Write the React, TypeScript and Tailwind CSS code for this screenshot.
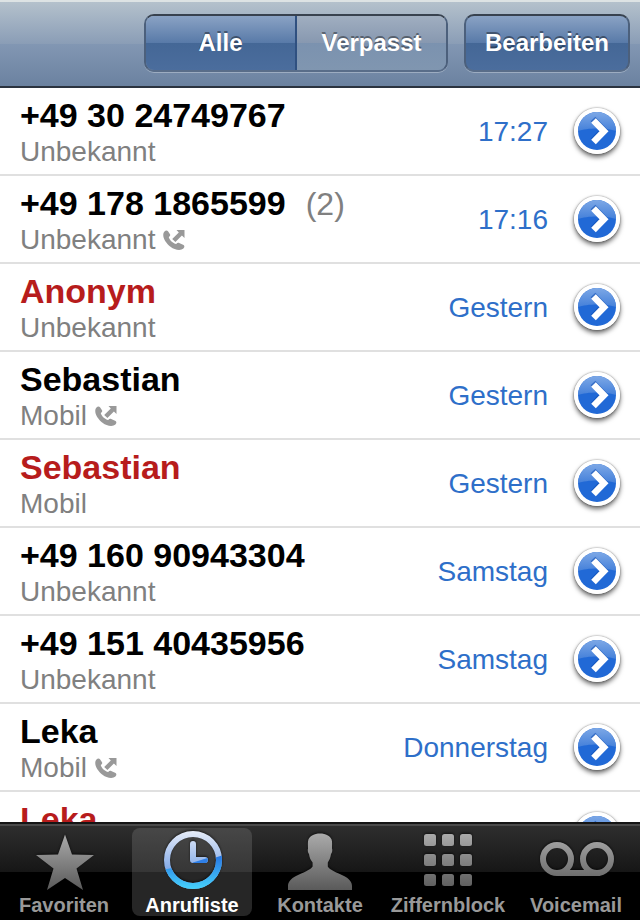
import React, { useState } from "react";

interface Call {
  name: string;
  label?: string;
  time?: string;
  count?: number;
  missed?: boolean;
  outgoing?: boolean;
}

const calls: Call[] = [
  { name: "+49 30 24749767", label: "Unbekannt", time: "17:27" },
  { name: "+49 178 1865599", label: "Unbekannt", time: "17:16", count: 2, outgoing: true },
  { name: "Anonym", label: "Unbekannt", time: "Gestern", missed: true },
  { name: "Sebastian", label: "Mobil", time: "Gestern", outgoing: true },
  { name: "Sebastian", label: "Mobil", time: "Gestern", missed: true },
  { name: "+49 160 90943304", label: "Unbekannt", time: "Samstag" },
  { name: "+49 151 40435956", label: "Unbekannt", time: "Samstag" },
  { name: "Leka", label: "Mobil", time: "Donnerstag", outgoing: true },
  { name: "Leka", missed: true },
];

const OutgoingIcon = () => (
  <svg viewBox="0 0 22 20" className="w-[22px] h-5 fill-[#999999]" aria-hidden="true">
    <path d="M1.5 1.5 C2.500 .4 4.200 .3 5 1.300 L7 4.200 C7.600 5.400 7 6.200 5.800 7.200 C6.400 9.800 10 13.400 13.200 14 C14.200 12.900 15 12.500 16.200 13 L20.600 15 C21.800 15.800 21.500 17.600 20.400 18.600 C18.600 20.200 15 20.400 11.600 19 C6.400 16.800 2 12 .6 7.400 C-.1 4.800 .3 2.700 1.500 1.500 Z" />
    <path d="M13.500 0 H21.500 V8 L18.900 5.600 L12.400 12 L9.200 8.900 L15.800 2.500 Z" />
  </svg>
);

// Round blue button at the end of each row
const DetailIcon = () => (
  <svg viewBox="0 0 46 46" className="w-[46px] h-[46px]" aria-hidden="true">
    <defs>
      <linearGradient id="detail-gloss" x1="0" y1="0" x2="0" y2="1">
        <stop offset="0" stopColor="#7da8e6" />
        <stop offset="1" stopColor="#4480da" />
      </linearGradient>
    </defs>
    <circle cx="23" cy="23" r="23" fill="#fff" />
    <circle cx="23" cy="23" r="19" fill="#2169d6" />
    <path d="M4 23 A19 19 0 0 1 42 23 C33 19.500 13 19.500 4 23 Z" fill="url(#detail-gloss)" />
    <path d="M19 11 L29.500 22 L19 33" fill="none" stroke="#0f4fb4" strokeWidth="6.500" opacity=".6" />
    <path d="M19.500 12.500 L30 23.300 L19.500 34" fill="none" stroke="#fff" strokeWidth="6.500" />
  </svg>
);

const CallRow = ({ call }: { call: Call }) => (
  <li className="h-[88px] flex items-center px-5 bg-white border-b-2 border-[#e0e0e0]">
    <div className="flex-1 min-w-0">
      <div className="flex items-baseline gap-5 whitespace-nowrap">
        <span className={`text-[34px] leading-10 font-bold ${call.missed ? "text-[#b71c1c]" : "text-black"}`}>{call.name}</span>
        {call.count && <span className="text-[32px] leading-10 text-[#808080]">({call.count})</span>}
      </div>
      <div className="h-8 pt-px flex items-center gap-2 text-[28px] leading-8 text-[#808080]">
        <span>{call.label}</span>
        {call.outgoing && <OutgoingIcon />}
      </div>
    </div>
    <span className="pt-0.5 text-[28px] leading-8 text-[#2e6fc9]">{call.time}</span>
    <button aria-label="Details" className="ml-[26px] rounded-full shadow-[0_3px_5px_rgba(0,0,0,0.6),0_0_2px_rgba(0,0,0,0.5)]">
      <DetailIcon />
    </button>
  </li>
);

const StarIcon = () => (
  <path fill="url(#tab-gray)" d="M41 4.500 L48 24.500 L70 25 L52.500 38.600 L59 60 L41 48 L23 60 L29.500 38.600 L12 25 L34 24.500 Z" />
);

const ClockIcon = () => (
  <g fill="none" strokeWidth="6" strokeLinecap="round" strokeLinejoin="round">
    <defs>
      <linearGradient id="clock-top" gradientUnits="userSpaceOnUse" x1="0" y1="1" x2="0" y2="38">
        <stop offset="0" stopColor="#e6ecf8" />
        <stop offset="1" stopColor="#86ace8" />
      </linearGradient>
      <linearGradient id="clock-bottom" gradientUnits="userSpaceOnUse" x1="0" y1="26" x2="0" y2="59">
        <stop offset="0" stopColor="#2777e4" />
        <stop offset="1" stopColor="#46d2fc" />
      </linearGradient>
      <clipPath id="clock-clip">
        <path d="M0 41 Q42 36 80 22 V60 H0 Z" />
      </clipPath>
    </defs>
    <circle cx="41" cy="30" r="26" stroke="url(#clock-top)" />
    <path d="M41 14 V30 H53" stroke="url(#clock-top)" />
    <g clipPath="url(#clock-clip)">
      <circle cx="41" cy="30" r="26" stroke="url(#clock-bottom)" />
    </g>
    <path d="M41 32.500 L55.500 28 C56.500 31 55 33 53 33 H41 Z" fill="#2f80e8" stroke="none" />
  </g>
);

const PersonIcon = () => (
  <path
    fill="url(#tab-gray)"
    d="M40 3.500 C46 3.500 50 6 51.600 9.500 C52.400 12 52 15 52 18.500 C52.800 20 52 23 51 24 C50.500 27.500 49.500 30 47.800 32.500 V36.500 C49.500 40 57 42.500 64 46 C69 48.500 72 52 72 56 V60 H8 V56 C8 52 11 48.500 16 46 C23 42.500 30.500 40 32.600 36.500 V32.500 C30.500 30 29.500 27.500 29 24 C28 23 27.400 20 28 18.500 C28 15 27.600 12 28.400 9.500 C30 6 34 3.500 40 3.500 Z"
  />
);

const KeypadIcon = () => (
  <g fill="url(#tab-gray)">
    {[4, 24, 44].map((y) => [16, 34, 52].map((x) => (
      <rect key={`${x}-${y}`} x={x} y={y} width="12" height="12" rx="2.500" />
    )))}
  </g>
);

const VoicemailIcon = () => (
  <g fill="none" stroke="url(#tab-gray)" strokeWidth="6">
    <circle cx="21" cy="29" r="14" />
    <circle cx="61" cy="29" r="14" />
    <path d="M21 43 H61 V42.900" />
  </g>
);

const tabs = [
  { name: "Favoriten", Icon: StarIcon },
  { name: "Anrufliste", Icon: ClockIcon },
  { name: "Kontakte", Icon: PersonIcon },
  { name: "Ziffernblock", Icon: KeypadIcon },
  { name: "Voicemail", Icon: VoicemailIcon },
];

const blueFill = "bg-[linear-gradient(#8aa2c4_0%,#587aa8_50%,#446796_50%,#4b6d9d_100%)]";
const grayFill = "bg-[linear-gradient(#a0aec0_0%,#8798b0_50%,#7b92af_50%,#8096b0_100%)]";
const buttonFrame = "h-[58px] rounded-[10px] border-2 border-t-[#38424f] border-x-[#4c607c] border-b-[#596d89] shadow-[0_1px_0_rgba(255,255,255,0.3)]";
const buttonText = "text-2xl leading-7 font-bold text-white [text-shadow:0_-2px_0_rgba(0,0,0,0.4)]";

const App = () => {
  const [filter, setFilter] = useState("Alle");
  const [activeTab, setActiveTab] = useState("Anrufliste");

  const visibleCalls = filter === "Alle" ? calls : calls.filter((c) => c.missed);

  return (
    <div className="h-screen flex flex-col bg-white font-['Liberation_Sans',Arial,sans-serif]">
      {/* Top bar */}
      <header className="h-[88px] shrink-0 flex items-start justify-end gap-4 pt-3 pr-[10px] border-t-2 border-t-[#dde3e4] border-b-2 border-b-[#2b333f] bg-[linear-gradient(#b4c1cc_0%,#8a9db6_50%,#8297b3_50%,#6b82a0_100%)]">
        <div className={`w-[304px] flex overflow-hidden ${buttonFrame}`}>
          {["Alle", "Verpasst"].map((option) => (
            <button
              key={option}
              onClick={() => setFilter(option)}
              aria-pressed={filter === option}
              className={`flex-1 border-r-2 border-[#2f5080] last:border-r-0 ${buttonText} ${filter === option ? blueFill : grayFill}`}
            >
              {option}
            </button>
          ))}
        </div>
        <button className={`w-[166px] ${buttonFrame} ${buttonText} ${blueFill}`}>Bearbeiten</button>
      </header>

      {/* Call list */}
      <ul className="flex-1 min-h-0 overflow-y-auto [scrollbar-width:none]">
        {visibleCalls.map((call, i) => (
          <CallRow key={i} call={call} />
        ))}
      </ul>

      {/* Tab bar */}
      <nav className="h-[98px] shrink-0 grid grid-cols-5 pt-1 border-t-2 border-[#151515] bg-[linear-gradient(#4a4a4a_0px,#4a4a4a_2px,#2e2e2e_2px,#161616_48px,#000_48px)]">
        <svg width="0" height="0" className="absolute" aria-hidden="true">
          <linearGradient id="tab-gray" gradientUnits="userSpaceOnUse" x1="0" y1="2" x2="0" y2="60">
            <stop offset="0" stopColor="#adadad" />
            <stop offset="1" stopColor="#5a5a5a" />
          </linearGradient>
        </svg>
        {tabs.map(({ name, Icon }) => (
          <button
            key={name}
            onClick={() => setActiveTab(name)}
            className={`h-[88px] mx-1 pt-0.5 flex flex-col items-center rounded-lg text-xl leading-6 font-bold ${activeTab === name ? "text-white bg-[linear-gradient(#474747_0px,#363636_44px,#262626_44px,#262626_100%)]" : "text-[#999999]"}`}
          >
            <svg viewBox="0 0 80 60" className="w-20 h-[60px] shrink-0 [filter:drop-shadow(0_-1px_1px_rgba(0,0,0,0.6))]" aria-hidden="true">
              <Icon />
            </svg>
            <span className="mt-[3px]">{name}</span>
          </button>
        ))}
      </nav>
    </div>
  );
};

export default App;
